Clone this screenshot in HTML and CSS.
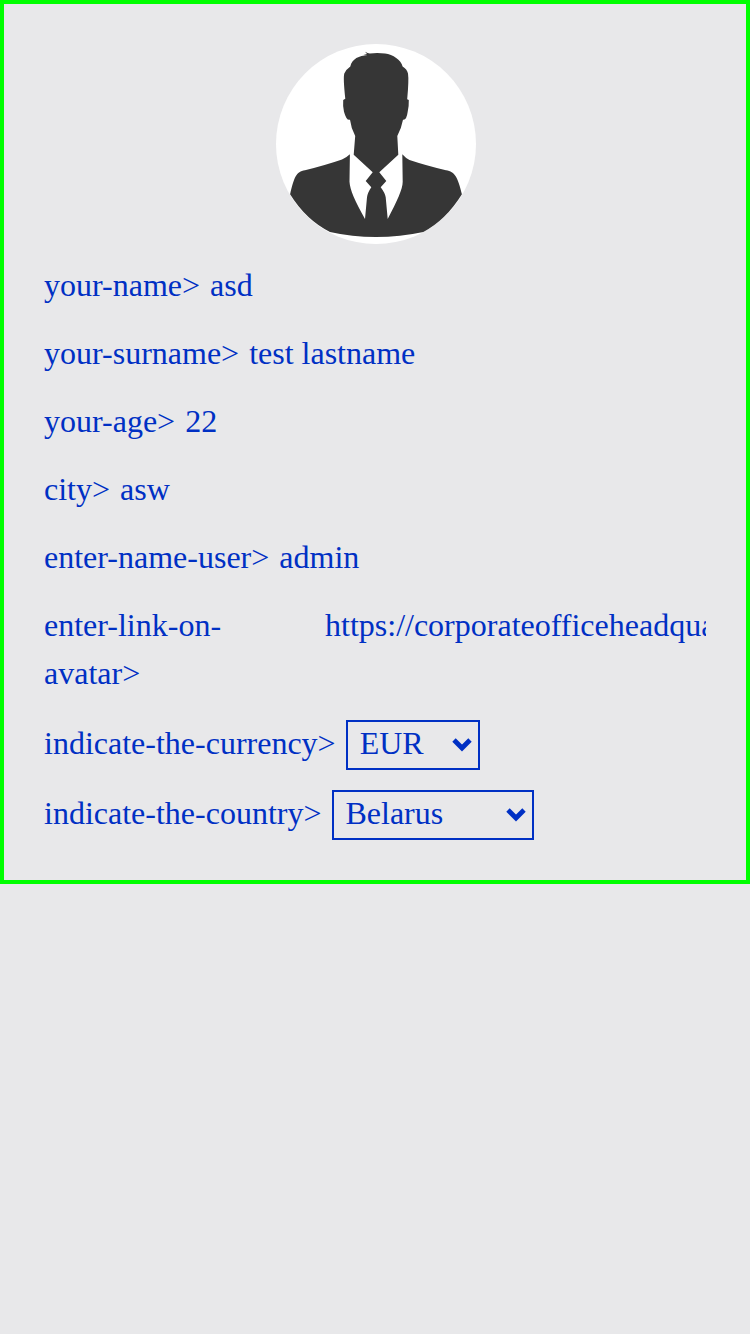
FILE: index.html
```html
<!DOCTYPE html>
<html lang="en">
<head>
<meta charset="utf-8">
<title>Profile</title>
<link rel="stylesheet" href="styles.css">
</head>
<body>
<main class="profile">
  <svg class="avatar" viewBox="0 0 200 200" role="img" aria-label="avatar">
    <circle cx="100" cy="100" r="100" fill="#fff"/>
    <path fill="#363636" d="M89 7.7Q92 9.5 94 9.4Q102 8.8 109 9.5C117 10.5 125 16 126.6 22.5Q131 25 132 29.5Q133 36 131.2 55.3L132.8 56Q133 63 131.7 67.7Q130.5 76.5 127 75.7Q125.5 84 121.3 92L122.3 110.7L103.3 128.3L110.3 137L104.7 143.3Q109 149 109.7 153.3L111.7 175C121 157 126.7 145 126.7 137.7L126.3 110.3Q129.5 114 133.5 116Q150 121.5 170 126.3C179 127.5 182 134 185.9 150.3Q170 176 147.3 188Q124 193 100 193Q76 193 54 188Q30 176 14.1 150.3C18 134 20 127.5 29 126.3Q50 121 66 115.5Q70 114 73.9 110.3L73.5 137.7C74 146 79 157 89 175L91 153.3Q91.5 149 95.3 143.3L89.7 137L96.7 128.3L77.7 110.7L79.2 92Q75 84 74 75.7Q70.5 77 68 67.7Q66.7 63 67.2 56L69.3 54.7Q67 34 68.3 29.5Q70 25.5 74.3 22.5C76 15 83 11.5 91.7 11.3L87.5 11L91 9.9Z"/>
  </svg>
  <div class="row"><span class="label">your-name&gt;</span><span class="value">asd</span></div>
  <div class="row"><span class="label">your-surname&gt;</span><span class="value">test lastname</span></div>
  <div class="row"><span class="label">your-age&gt;</span><span class="value">22</span></div>
  <div class="row"><span class="label">city&gt;</span><span class="value">asw</span></div>
  <div class="row"><span class="label">enter-name-user&gt;</span><span class="value">admin</span></div>
  <div class="row link-row"><span class="label">enter-link-on-avatar&gt;</span><span class="value">https://corporateofficeheadquarters</span></div>
  <div class="row select-row"><span class="label">indicate-the-currency&gt;</span>
    <div class="select currency"><span>EUR</span><svg class="chevron" viewBox="0 0 20 14"><path d="M2 2L10 10L18 2"/></svg></div>
  </div>
  <div class="row select-row"><span class="label">indicate-the-country&gt;</span>
    <div class="select country"><span>Belarus</span><svg class="chevron" viewBox="0 0 20 14"><path d="M2 2L10 10L18 2"/></svg></div>
  </div>
</main>
</body>
</html>
```
FILE: styles.css
```css
* { box-sizing: border-box; }
body {
  margin: 0;
  background: #e8e8ea;
  color: #0030c4;
  font: 32px/48px "Liberation Serif", serif;
}
.profile {
  display: flex;
  flex-direction: column;
  height: 884px;
  padding: 40px;
  border: 4px solid #00ff00;
}
.avatar {
  flex: none;
  width: 200px;
  height: 200px;
  align-self: center;
  margin: 0 0 17px 2px;
}
.row {
  display: flex;
  flex: none;
  gap: 10px;
  margin-bottom: 20px;
  white-space: nowrap;
}
.link-row { margin-bottom: 23px; }
.link-row .label {
  flex: 0 0 271px;
  white-space: normal;
}
.link-row .value {
  min-width: 0;
  overflow: hidden;
}
.select-row {
  height: 50px;
  line-height: 46px;
}
.select-row:last-child { margin-bottom: 0; }
.select {
  display: flex;
  justify-content: space-between;
  align-items: center;
  height: 50px;
  padding: 0 6px 0 12px;
  border: 2px solid #0030c4;
}
.select span { padding-bottom: 4px; }
.currency { width: 134px; }
.country {
  width: 202px;
  margin-left: 0.6px;
  padding-left: 11.4px;
}
.chevron {
  width: 20px;
  height: 14px;
  fill: none;
  stroke: #0030c4;
  stroke-width: 4.8;
}
```
